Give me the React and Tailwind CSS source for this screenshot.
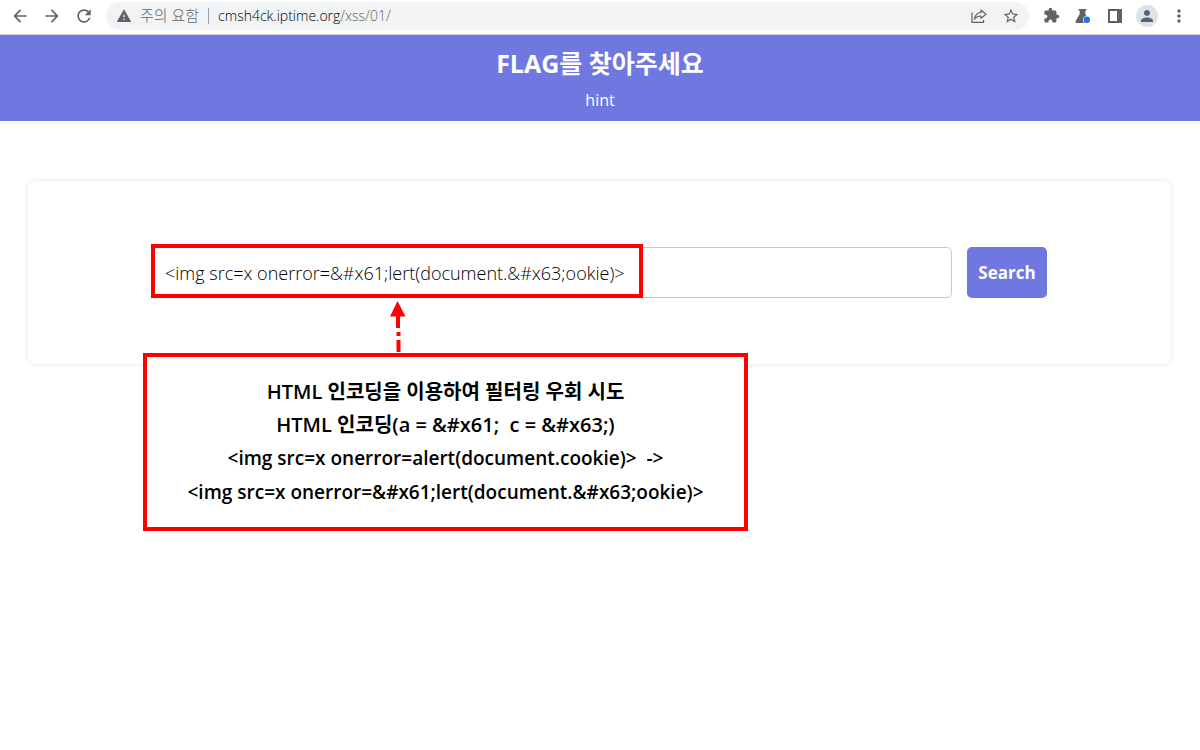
import React, { useState } from "react";
import {
  MdArrowBack,
  MdArrowForward,
  MdRefresh,
  MdWarning,
  MdStarBorder,
  MdExtension,
  MdPerson,
  MdMoreVert,
} from "react-icons/md";

const PAYLOAD = "<img src=x onerror=&#x61;lert(document.&#x63;ookie)>";

const NOTES = [
  "HTML 인코딩을 이용하여 필터링 우회 시도",
  "HTML 인코딩(a = &#x61;  c = &#x63;)",
];

const CODE_NOTES = [
  "<img src=x onerror=alert(document.cookie)>  ->",
  "<img src=x onerror=&#x61;lert(document.&#x63;ookie)>",
];

function ShareIcon() {
  return (
    <svg width="16" height="16" viewBox="0 0 16 16" fill="none" stroke="currentColor" strokeWidth="1.2">
      <path d="M1 4.500v9.900h11.500v-2.400" />
      <path d="M10 2l5 4.200-5 4.200V8C7 8 5 9 3.400 11.200 4 7.500 6 4.800 10 4.400z" strokeLinejoin="round" />
    </svg>
  );
}

function FlaskIcon() {
  return (
    <svg width="16" height="16" viewBox="0 0 16 16" fill="currentColor">
      <path d="M3.500 1h8v1.600h-1.200V6l4 7q.8 2-1.200 2H1.900q-2 0-1.200-2l4-7V2.600H3.500z" />
      <circle cx="11.800" cy="11.800" r="3.800" fill="#ffffff" />
      <circle cx="11.800" cy="11.800" r="3.200" fill="#1a73e8" />
    </svg>
  );
}

function SidePanelIcon() {
  return (
    <svg width="14" height="14" viewBox="0 0 14 14" fill="currentColor">
      <path d="M0 0h14v14H0zM2 2v10h7V2z" fillRule="evenodd" />
    </svg>
  );
}

function IconButton({ label, children }) {
  return (
    <button aria-label={label} className="w-8 h-8 flex items-center justify-center">
      {children}
    </button>
  );
}

function BrowserBar() {
  return (
    <div className="h-[35px] pl-1 pb-[3px] pr-[5px] flex items-center bg-white border-b border-[#d5d7da] text-[#5f6368]">
      <IconButton label="Back">
        <MdArrowBack size={20} />
      </IconButton>
      <IconButton label="Forward">
        <MdArrowForward size={20} />
      </IconButton>
      <IconButton label="Reload">
        <MdRefresh size={20} />
      </IconButton>

      <div className="flex-1 h-7 ml-1.5 mr-1.5 pl-2.5 pr-0.5 flex items-center rounded-full bg-[#f1f3f4]">
        <MdWarning size={16} />
        <span className="ml-2 text-[15px] font-light">주의 요함</span>
        <span className="w-px h-4 mx-[9px] bg-[#9aa0a6]" />
        <span className="text-sm font-light">
          <span className="text-black">cmsh4ck.iptime.org</span>/xss/01/
        </span>
        <div className="ml-auto flex">
          <IconButton label="Share">
            <ShareIcon />
          </IconButton>
          <IconButton label="Bookmark">
            <MdStarBorder size={18} />
          </IconButton>
        </div>
      </div>

      <IconButton label="Extensions">
        <MdExtension size={17} />
      </IconButton>
      <IconButton label="Labs">
        <FlaskIcon />
      </IconButton>
      <IconButton label="Side panel">
        <SidePanelIcon />
      </IconButton>
      <IconButton label="Profile">
        <span className="w-[22px] h-[22px] flex items-center justify-center rounded-full bg-[#dee1e6] text-[#54617a]">
          <MdPerson size={18} />
        </span>
      </IconButton>
      <IconButton label="Menu">
        <MdMoreVert size={20} />
      </IconButton>
    </div>
  );
}

function Arrow() {
  return (
    <svg
      width="16"
      height="52"
      viewBox="0 0 16 52"
      fill="#ff0000"
      className="absolute left-[238px] top-[54px]"
    >
      <path d="M7.500 0L15.500 15.500H0z" />
      <path d="M6 15h4v12H6zM6.500 31h4v4h-4zM6.500 39h4v12h-4z" />
    </svg>
  );
}

export default function App() {
  const [query, setQuery] = useState(PAYLOAD);

  return (
    <div className="min-h-screen bg-white font-['Open_Sans','Noto_Sans_CJK_KR',sans-serif]">
      <BrowserBar />

      <header className="h-[86px] pt-2.5 bg-[#6e78e0] text-white text-center">
        <h1 className="text-[25px] leading-9 font-bold">FLAG를 찾아주세요</h1>
        <p className="mt-[7px] text-base leading-6">hint</p>
      </header>

      <main className="ml-7 mr-[29px] mt-[60px] px-[124px] py-[66px] rounded-lg shadow-[0_0_5px_rgba(0,0,0,0.1)]">
        <form className="flex gap-[15px]" onSubmit={(e) => e.preventDefault()}>
          <div className="relative flex-1">
            <input
              type="text"
              aria-label="Search"
              value={query}
              onChange={(e) => setQuery(e.target.value)}
              className="w-full h-[51px] px-3 border border-[#cdc7c9] rounded-[5px] text-lg font-light text-black focus:outline-none"
            />
            <div className="absolute -left-px -top-[3px] w-[492px] h-[54px] border-4 border-[#ff0000] pointer-events-none" />
            <Arrow />
            <div className="absolute -left-[9px] top-[106px] w-[605px] h-[178px] pt-[18px] border-4 border-[#ff0000] bg-white text-center font-semibold text-black whitespace-pre">
              {NOTES.map((line) => (
                <p key={line} className="text-xl leading-[33px]">
                  {line}
                </p>
              ))}
              {CODE_NOTES.map((line) => (
                <p key={line} className="text-[19px] leading-[34px]">
                  {line}
                </p>
              ))}
            </div>
          </div>
          <button
            type="submit"
            className="w-20 h-[51px] rounded-[5px] bg-[#6e78e0] text-white text-[17px] font-bold"
          >
            Search
          </button>
        </form>
      </main>
    </div>
  );
}
